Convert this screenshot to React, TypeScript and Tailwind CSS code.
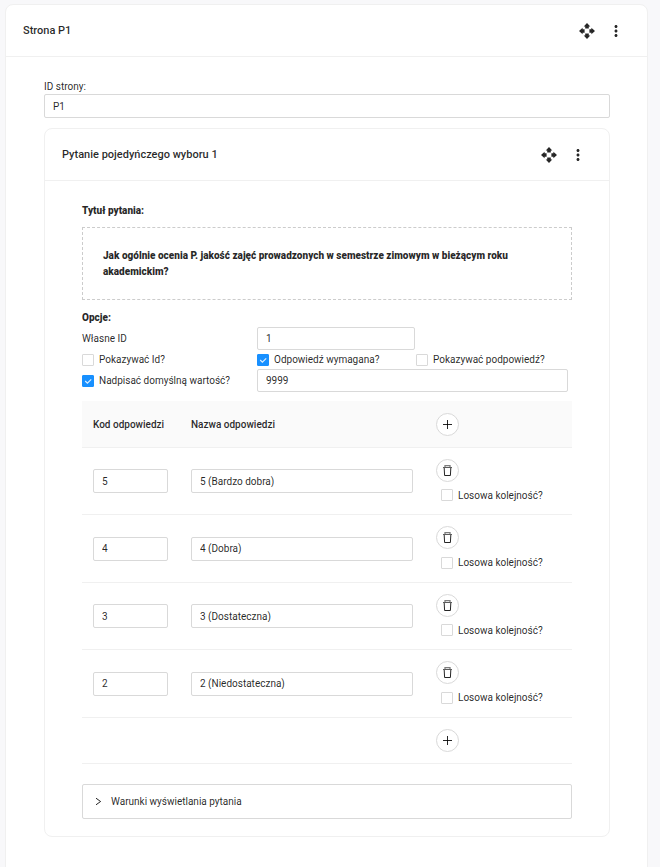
import React, { useState } from "react";
import { MdMoreVert } from "react-icons/md";

const answers = [
  { code: "5", name: "5 (Bardzo dobra)" },
  { code: "4", name: "4 (Dobra)" },
  { code: "3", name: "3 (Dostateczna)" },
  { code: "2", name: "2 (Niedostateczna)" },
];

const inputClass =
  "block rounded-[2px] border border-[#d9d9d9] bg-white px-2 text-black/85 outline-none focus:border-[#1890ff]";

function Checkbox({ label, checked = false }: { label: string; checked?: boolean }) {
  return (
    <label className="flex items-center gap-[5px] whitespace-nowrap">
      <span className="grid size-3 shrink-0">
        <input
          type="checkbox"
          defaultChecked={checked}
          className="peer col-start-1 row-start-1 size-3 appearance-none rounded-[1px] border border-[#d9d9d9] bg-white checked:border-[#1890ff] checked:bg-[#1890ff]"
        />
        <svg
          viewBox="0 0 12 12"
          className="pointer-events-none col-start-1 row-start-1 hidden size-3 peer-checked:block"
          fill="none"
          stroke="#fff"
          strokeOpacity="0.85"
          strokeWidth="1.2"
          aria-hidden="true"
        >
          <path d="M3.2 6 5.4 8.2 9.2 4.3" />
        </svg>
      </span>
      <span className="pt-px">{label}</span>
    </label>
  );
}

function MoveIcon() {
  return (
    <svg width="18" height="18" viewBox="0 0 18 18" fill="currentColor" aria-hidden="true">
      <path d="M9 1 12.3 4.6H10.8V6.6H7.2V4.6H5.7z" />
      <path d="M9 17 5.7 13.4H7.2V11.4H10.8V13.4H12.3z" />
      <path d="M1 9 4.6 5.7V7.2H6.6V10.8H4.6V12.3z" />
      <path d="M17 9 13.4 12.3V10.8H11.4V7.2H13.4V5.7z" />
    </svg>
  );
}

function CardHeader({ title }: { title: string }) {
  return (
    <header className="flex h-[52px] items-center justify-between border-b border-[#f0f0f0] pr-[22px] pl-[17px]">
      <h2 className="text-[11px] leading-4 font-medium">{title}</h2>
      <div className="flex gap-[11px] pt-px">
        <button type="button" aria-label="Przesuń" className="block">
          <MoveIcon />
        </button>
        <button type="button" aria-label="Więcej" className="block">
          <MdMoreVert size={18} />
        </button>
      </div>
    </header>
  );
}

function RoundButton({ label, children }: { label: string; children: React.ReactNode }) {
  return (
    <button
      type="button"
      aria-label={label}
      className="flex size-[23px] items-center justify-center rounded-full border border-[#d9d9d9] bg-white"
    >
      {children}
    </button>
  );
}

function PlusIcon() {
  return (
    <svg width="11" height="11" viewBox="0 0 11 11" stroke="currentColor" strokeWidth="1" aria-hidden="true">
      <path d="M5.5 1v9M1 5.5h9" />
    </svg>
  );
}

function TrashIcon() {
  return (
    <svg width="11" height="11" viewBox="0 0 11 11" fill="none" stroke="currentColor" aria-hidden="true">
      <path d="M2.2 3 2.6 10.5h5.8L8.8 3" strokeWidth="1" />
      <path d="M1 2.5h9" strokeWidth="1" strokeOpacity="0.75" />
      <path d="M3 1.9V.7h5v1.2" strokeWidth="1.3" strokeOpacity="0.6" />
    </svg>
  );
}

export default function App() {
  const [open, setOpen] = useState(false);
  return (
    <div className="min-h-screen bg-[#f8f8fa] pt-1 pr-3 pl-[5px] font-['Roboto',sans-serif] text-[10px] leading-4 text-black/85">
      <main className="min-h-[900px] rounded-t-lg border border-[#f0f0f0] bg-white">
        <CardHeader title="Strona P1" />
        <div className="pt-[22px] pr-[37px] pl-[38px]">
          <label htmlFor="page-id" className="block h-[15px]">
            ID strony:
          </label>
          <input id="page-id" defaultValue="P1" className={`${inputClass} h-6 w-full`} />

          <section className="mt-[10px] rounded-lg border border-[#f0f0f0] bg-white">
            <CardHeader title="Pytanie pojedyńczego wyboru 1" />
            <div className="px-[37px] pt-[22px] pb-[17px]">
              <h3 className="font-black">Tytuł pytania:</h3>
              <div className="mt-2 border border-dashed border-[#ccc] px-5 pt-5 pb-[19px] font-black">
                Jak ogólnie ocenia P. jakość zajęć prowadzonych w semestrze zimowym w bieżącym roku akademickim?
              </div>

              <h3 className="mt-[10px] font-black">Opcje:</h3>
              <div className="mt-px grid grid-cols-[175fr_159fr_156fr] grid-rows-[23px_19px_23px] items-center">
                <label htmlFor="own-id">Własne ID</label>
                <input id="own-id" defaultValue="1" className={`${inputClass} mr-px h-[23px] min-w-0`} />
                <span />
                <Checkbox label="Pokazywać Id?" />
                <Checkbox label="Odpowiedź wymagana?" checked />
                <Checkbox label="Pokazywać podpowiedź?" />
                <Checkbox label="Nadpisać domyślną wartość?" checked />
                <input
                  aria-label="Domyślna wartość"
                  defaultValue="9999"
                  className={`${inputClass} col-span-2 mr-1 h-[23px] min-w-0`}
                />
              </div>

              <table className="mt-[9px] w-full table-fixed border-separate border-spacing-0 text-left">
                <colgroup>
                  <col className="w-1/5" />
                  <col className="w-1/2" />
                  <col />
                </colgroup>
                <thead>
                  <tr className="h-[47px] bg-[#fafafa] *:border-b *:border-[#f0f0f0] *:pt-px *:pl-[11px]">
                    <th className="font-medium whitespace-nowrap">Kod odpowiedzi</th>
                    <th className="font-medium">Nazwa odpowiedzi</th>
                    <th>
                      <RoundButton label="Dodaj odpowiedź">
                        <PlusIcon />
                      </RoundButton>
                    </th>
                  </tr>
                </thead>
                <tbody>
                  {answers.map((a) => (
                    <tr key={a.code} className="odd:h-[67px] even:h-[68px] *:border-b *:border-[#f0f0f0] *:pl-[11px]">
                      <td className="pr-3">
                        <input aria-label="Kod odpowiedzi" defaultValue={a.code} className={`${inputClass} h-6 w-full`} />
                      </td>
                      <td className="pr-3">
                        <input aria-label="Nazwa odpowiedzi" defaultValue={a.name} className={`${inputClass} h-6 w-full`} />
                      </td>
                      <td>
                        <RoundButton label="Usuń odpowiedź">
                          <TrashIcon />
                        </RoundButton>
                        <div className="mt-[5px] pl-[5px]">
                          <Checkbox label="Losowa kolejność?" />
                        </div>
                      </td>
                    </tr>
                  ))}
                  <tr className="h-[46px] *:border-b *:border-[#f0f0f0] *:pl-[11px]">
                    <td />
                    <td />
                    <td>
                      <RoundButton label="Dodaj odpowiedź na końcu">
                        <PlusIcon />
                      </RoundButton>
                    </td>
                  </tr>
                </tbody>
              </table>

              <button
                type="button"
                aria-expanded={open}
                onClick={() => setOpen(!open)}
                className="mt-5 flex h-[35px] w-full items-center gap-2 rounded-[2px] border border-[#d9d9d9] px-[11px]"
              >
                <svg width="9" height="9" viewBox="0 0 9 9" fill="none" stroke="currentColor" aria-hidden="true">
                  <path d="M2 1.2 6.6 4.5 2 7.8" />
                </svg>
                <span className="pt-px">Warunki wyświetlania pytania</span>
              </button>
            </div>
          </section>
        </div>
      </main>
    </div>
  );
}
